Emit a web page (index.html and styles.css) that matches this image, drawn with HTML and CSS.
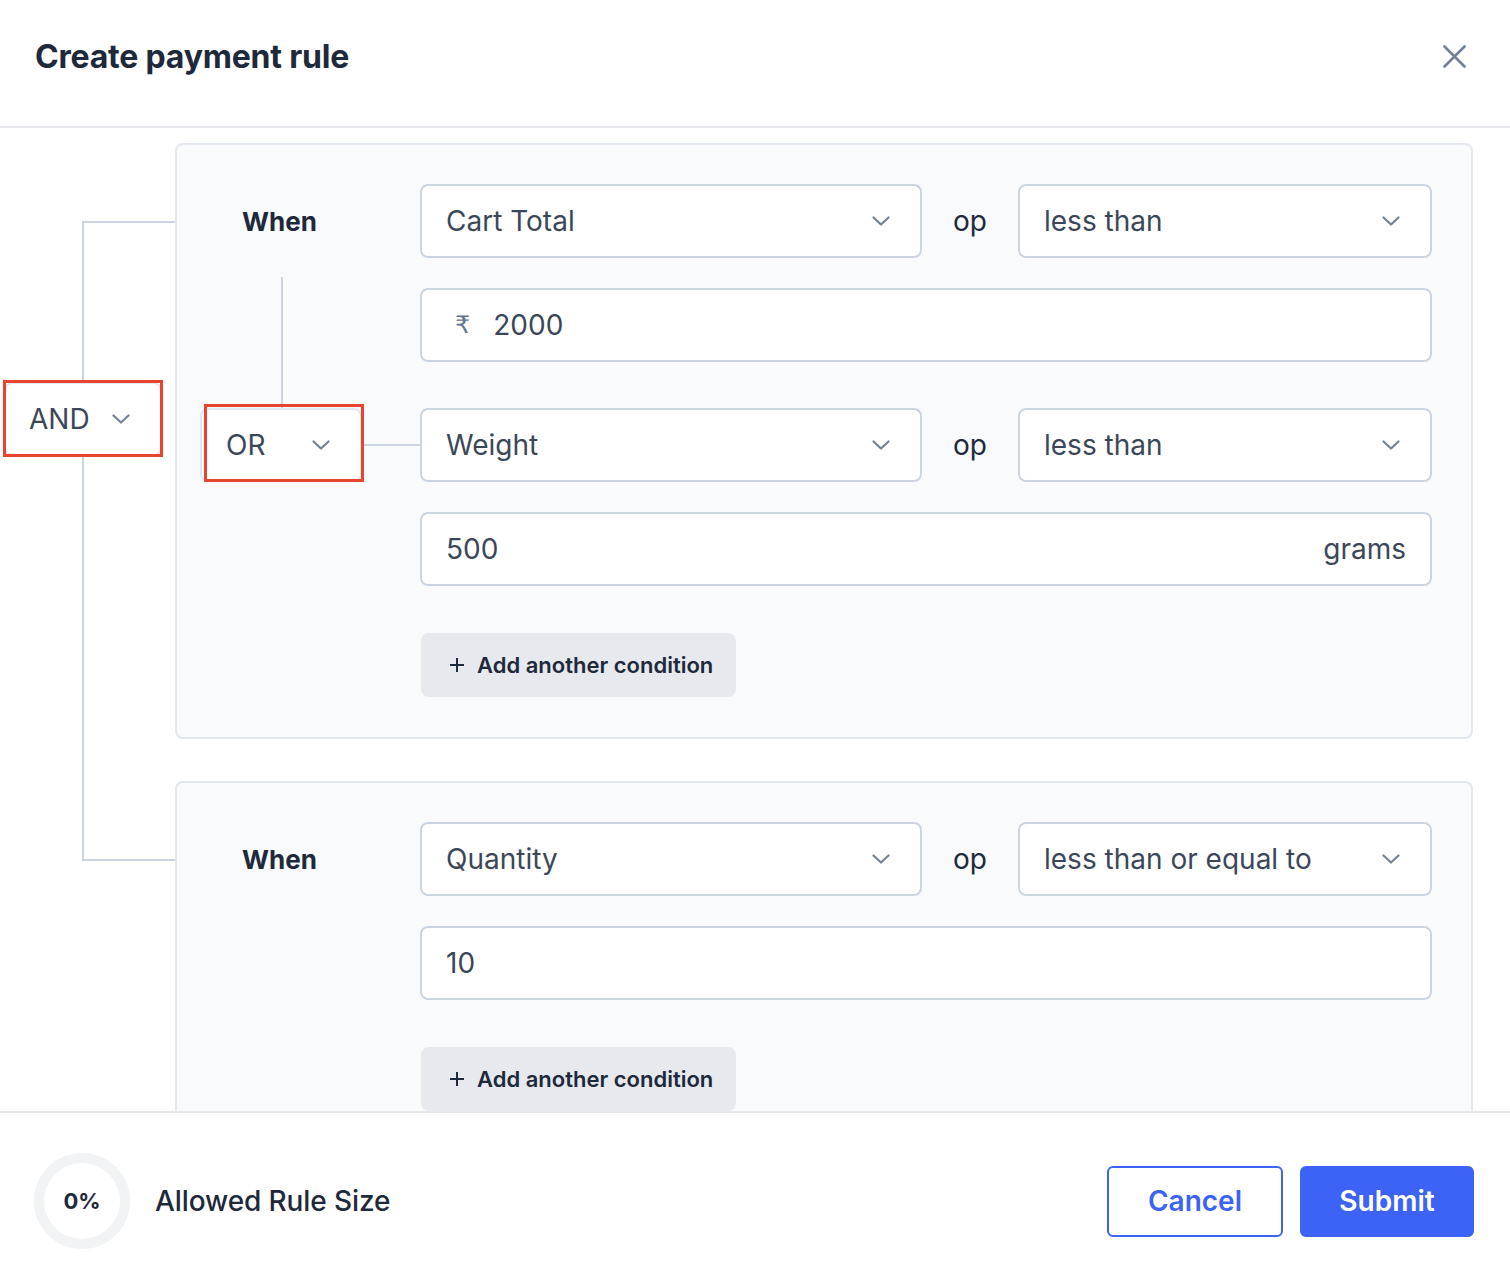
FILE: index.html
```html
<!DOCTYPE html>
<html lang="en">
<head>
<meta charset="utf-8">
<title>Create payment rule</title>
<link rel="stylesheet" href="styles.css">
</head>
<body>
<div class="modal">
  <header class="modal-header">
    <h1 class="modal-title">Create payment rule</h1>
    <button class="close-btn" aria-label="Close">
      <svg width="23" height="23" viewBox="0 0 23 23"><path d="M1.5 1.5 L21.5 21.5 M21.5 1.5 L1.5 21.5" /></svg>
    </button>
  </header>

  <main class="modal-body">
    <div class="rule-tree">
      <div class="and-col">
        <div class="bracket"></div>
        <div class="select logic-select logic-and highlighted">
          <span>AND</span>
          <svg class="chev" width="18" height="10" viewBox="0 0 18 10"><polyline points="1.5,1.5 9,8.5 16.5,1.5"/></svg>
        </div>
      </div>

      <div class="groups">
        <section class="group">
          <div class="condition condition-first">
            <div class="cond-label">
              <div class="when">When</div>
              <div class="v-line"></div>
            </div>
            <div class="cond-fields">
              <div class="field-row">
                <div class="select"><span>Cart Total</span><svg class="chev" width="18" height="10" viewBox="0 0 18 10"><polyline points="1.5,1.5 9,8.5 16.5,1.5"/></svg></div>
                <span class="op">op</span>
                <div class="select"><span>less than</span><svg class="chev" width="18" height="10" viewBox="0 0 18 10"><polyline points="1.5,1.5 9,8.5 16.5,1.5"/></svg></div>
              </div>
              <div class="input"><span class="prefix">₹</span><span>2000</span></div>
            </div>
          </div>

          <div class="condition">
            <div class="cond-label or-label">
              <div class="select logic-select logic-or highlighted">
                <span>OR</span>
                <svg class="chev" width="18" height="10" viewBox="0 0 18 10"><polyline points="1.5,1.5 9,8.5 16.5,1.5"/></svg>
              </div>
              <div class="h-line"></div>
            </div>
            <div class="cond-fields">
              <div class="field-row">
                <div class="select"><span>Weight</span><svg class="chev" width="18" height="10" viewBox="0 0 18 10"><polyline points="1.5,1.5 9,8.5 16.5,1.5"/></svg></div>
                <span class="op">op</span>
                <div class="select"><span>less than</span><svg class="chev" width="18" height="10" viewBox="0 0 18 10"><polyline points="1.5,1.5 9,8.5 16.5,1.5"/></svg></div>
              </div>
              <div class="input input-suffixed"><span>500</span><span class="suffix">grams</span></div>
            </div>
          </div>

          <div class="group-actions">
            <button class="add-btn"><svg width="16" height="16" viewBox="0 0 16 16"><path d="M8 1 V15 M1 8 H15"/></svg><span>Add another condition</span></button>
          </div>
        </section>

        <section class="group">
          <div class="condition">
            <div class="cond-label">
              <div class="when">When</div>
            </div>
            <div class="cond-fields">
              <div class="field-row">
                <div class="select"><span>Quantity</span><svg class="chev" width="18" height="10" viewBox="0 0 18 10"><polyline points="1.5,1.5 9,8.5 16.5,1.5"/></svg></div>
                <span class="op">op</span>
                <div class="select"><span>less than or equal to</span><svg class="chev" width="18" height="10" viewBox="0 0 18 10"><polyline points="1.5,1.5 9,8.5 16.5,1.5"/></svg></div>
              </div>
              <div class="input"><span>10</span></div>
            </div>
          </div>

          <div class="group-actions">
            <button class="add-btn"><svg width="16" height="16" viewBox="0 0 16 16"><path d="M8 1 V15 M1 8 H15"/></svg><span>Add another condition</span></button>
          </div>
        </section>
      </div>
    </div>
  </main>

  <footer class="modal-footer">
    <div class="rule-size">
      <div class="progress-ring"><span>0%</span></div>
      <span class="rule-size-label">Allowed Rule Size</span>
    </div>
    <div class="footer-actions">
      <button class="btn btn-outline">Cancel</button>
      <button class="btn btn-primary">Submit</button>
    </div>
  </footer>
</div>
</body>
</html>
```

FILE: styles.css
```css
* { box-sizing: border-box; }

html, body {
  margin: 0;
  height: 100%;
}

body {
  font-family: Inter, "Noto Sans", "Liberation Sans", sans-serif;
  background: #ffffff;
  color: #1e293b;
}

.modal {
  height: 100vh;
  display: flex;
  flex-direction: column;
  overflow: hidden;
}

/* Header */
.modal-header {
  flex: none;
  height: 128px;
  display: flex;
  align-items: center;
  justify-content: space-between;
  padding: 0 44px 14px 35px;
  border-bottom: 2px solid #e5e7eb;
}

.modal-title {
  margin: 0;
  font-size: 32px;
  font-weight: 700;
  color: #1e293b;
  letter-spacing: -0.2px;
}

.close-btn {
  border: 0;
  background: none;
  padding: 0;
  width: 23px;
  height: 23px;
  display: flex;
}

.close-btn path {
  stroke: #718096;
  stroke-width: 2.6;
  stroke-linecap: round;
  fill: none;
}

/* Body */
.modal-body {
  flex: 1;
  overflow: hidden;
  padding: 15px 37px 0 0;
}

.rule-tree {
  display: flex;
}

.and-col {
  flex: none;
  width: 175px;
  position: relative;
}

.bracket {
  margin: 78px 0 0 82px;
  height: 640px;
  border: 2px solid #cbd5e1;
  border-right: 0;
}

.groups {
  flex: 1;
  display: flex;
  flex-direction: column;
  gap: 42px;
}

.group {
  border: 2px solid #e2e8f0;
  border-radius: 8px;
  background: #f8fafc;
  padding: 39px 39px 40px 0;
}

.condition {
  display: grid;
  grid-template-columns: 243px 1fr;
}

.condition-first .cond-fields {
  padding-bottom: 46px;
}

.cond-label {
  display: flex;
  flex-direction: column;
}

.when {
  height: 74px;
  display: flex;
  align-items: center;
  padding-left: 65px;
  font-size: 26px;
  font-weight: 700;
  color: #1e293b;
}

.v-line {
  flex: 1;
  width: 2px;
  background: #cbd5e1;
  margin: 19px 0 0 104px;
}

.or-label {
  flex-direction: row;
  align-items: center;
  align-self: start;
  height: 74px;
  padding-left: 23px;
}

.h-line {
  flex: 1;
  height: 2px;
  background: #cbd5e1;
}

.cond-fields {
  display: flex;
  flex-direction: column;
  gap: 30px;
}

.field-row {
  display: grid;
  grid-template-columns: 1fr auto 414px;
  column-gap: 31px;
  align-items: center;
}

.op {
  font-size: 28px;
  color: #1e293b;
}

.select,
.input {
  height: 74px;
  border: 2px solid #cbd5e1;
  border-radius: 8px;
  background: #ffffff;
  display: flex;
  align-items: center;
  padding: 0 30px 0 24px;
  font-size: 28px;
  color: #3b4759;
}

.select {
  justify-content: space-between;
}

.chev {
  flex: none;
}

.chev polyline {
  fill: none;
  stroke: #718399;
  stroke-width: 2.2;
  stroke-linecap: round;
  stroke-linejoin: round;
}

.prefix {
  font-family: "DejaVu Sans", Inter, sans-serif;
  font-size: 24px;
  color: #64748b;
  margin: 0 23px 0 9px;
}

.input-suffixed {
  justify-content: space-between;
  padding-right: 24px;
}

.suffix {
  color: #3b4759;
}

/* Logic selects */
.logic-select {
  position: relative;
  flex: none;
  border-color: #e2e8f0;
}

.logic-and {
  position: absolute;
  left: 4px;
  top: 239px;
  width: 158px;
  padding-left: 23px;
}

.logic-or {
  width: 162px;
}

.highlighted::after {
  content: "";
  position: absolute;
  border: 3px solid #e8432c;
  pointer-events: none;
}

.logic-and::after {
  left: -3px;
  right: -3px;
  top: -4px;
  bottom: -3px;
}

.logic-or::after {
  left: 2px;
  right: -4px;
  top: -6px;
  bottom: -2px;
}

/* Add condition */
.group-actions {
  padding-left: 244px;
  margin-top: 47px;
}

.add-btn {
  height: 64px;
  width: 315px;
  border: 0;
  border-radius: 8px;
  background: #e6e9ee;
  font-family: inherit;
  font-size: 22px;
  font-weight: 600;
  color: #1e293b;
  display: inline-flex;
  align-items: center;
  gap: 12px;
  padding: 0 0 0 28px;
}

.add-btn path {
  stroke: #1e293b;
  stroke-width: 2;
  fill: none;
}

/* Footer */
.modal-footer {
  flex: none;
  height: 167px;
  border-top: 2px solid #e5e7eb;
  display: flex;
  align-items: center;
  justify-content: space-between;
  padding: 11px 36px 0 34px;
  background: #ffffff;
}

.rule-size {
  display: flex;
  align-items: center;
  gap: 25px;
}

.progress-ring {
  width: 96px;
  height: 96px;
  border-radius: 50%;
  border: 10px solid #f1f3f5;
  display: flex;
  align-items: center;
  justify-content: center;
  font-size: 22px;
  font-weight: 700;
  color: #1e293b;
}

.rule-size-label {
  font-size: 28px;
  font-weight: 500;
  color: #1e293b;
  letter-spacing: -0.1px;
}

.footer-actions {
  display: flex;
  gap: 17px;
}

.btn {
  height: 71px;
  border-radius: 6px;
  font-family: inherit;
  font-size: 28px;
  font-weight: 600;
  cursor: pointer;
}

.btn-outline {
  width: 176px;
  background: #ffffff;
  border: 2px solid #3d63f6;
  color: #3d63f6;
}

.btn-primary {
  width: 174px;
  background: #3d63f6;
  border: 2px solid #3d63f6;
  color: #ffffff;
}
```
